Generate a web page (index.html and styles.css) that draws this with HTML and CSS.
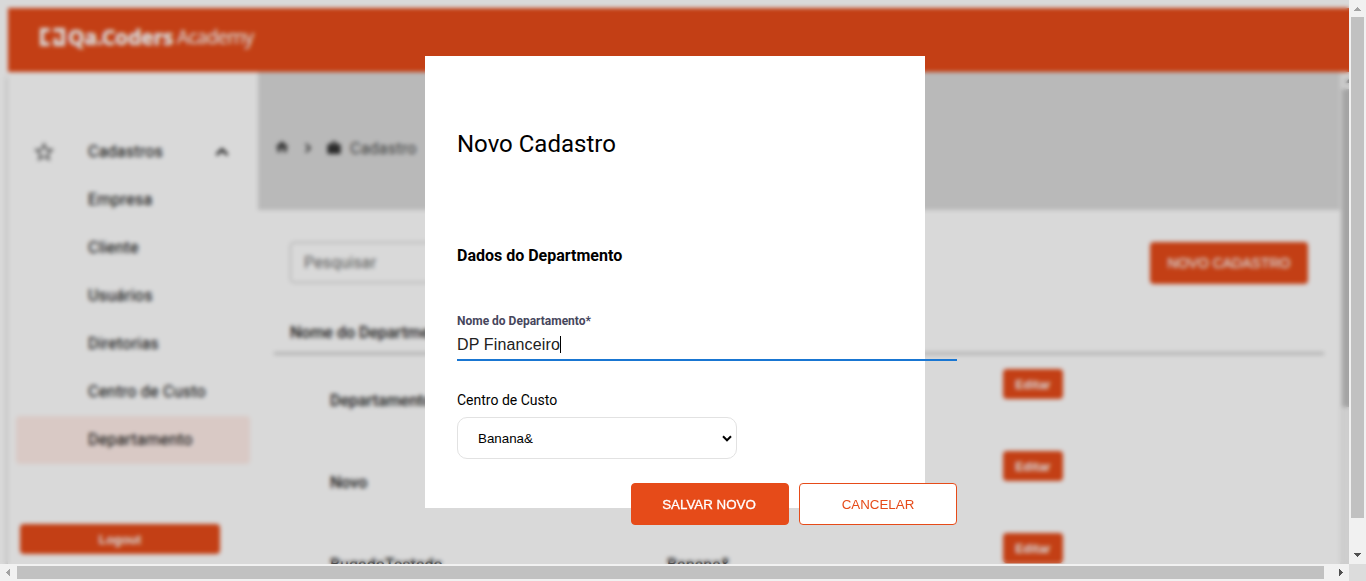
FILE: index.html
```html
<!DOCTYPE html>
<html lang="pt-BR">
<head>
<meta charset="utf-8">
<title>Qa.Coders Academy</title>
<link rel="stylesheet" href="styles.css">
</head>
<body>
<div class="window">
  <div class="viewport">
    <div class="app">
      <header class="topbar">
        <svg class="logo-mark" width="27" height="20" viewBox="0 0 27 20" fill="none" stroke="#fff" stroke-width="4"><path d="M10.500 3H3V17H10.500M14.500 3H24V17H16.500V11"/></svg>
        <span class="logo-name">Qa.Coders</span>
        <span class="logo-sub">Academy</span>
      </header>
      <div class="body">
        <nav class="sidebar">
          <div class="nav-item nav-parent">
            <svg width="24" height="24" viewBox="0 0 24 24" fill="#555"><path d="M22 9.24l-7.19-.62L12 2 9.19 8.63 2 9.24l5.46 4.73L5.82 21 12 17.27 18.18 21l-1.63-7.03L22 9.24zM12 15.4l-3.76 2.27 1-4.28-3.32-2.88 4.38-.38L12 6.1l1.71 4.04 4.38.38-3.32 2.88 1 4.28L12 15.4z"/></svg>
            <span class="nav-label">Cadastros</span>
            <svg width="24" height="24" viewBox="0 0 24 24" fill="#111"><path d="M12 8l-6 6 1.41 1.41L12 10.83l4.59 4.58L18 14z" stroke="#111" stroke-width=".6"/></svg>
          </div>
          <div class="nav-item"><span>Empresa</span></div>
          <div class="nav-item"><span>Cliente</span></div>
          <div class="nav-item"><span>Usuários</span></div>
          <div class="nav-item"><span>Diretorias</span></div>
          <div class="nav-item"><span>Centro de Custo</span></div>
          <div class="nav-item active"><span>Departamento</span></div>
          <button class="btn logout">Logout</button>
        </nav>
        <main class="main">
          <div class="banner">
            <svg class="home" width="16" height="16" viewBox="0 0 24 24" fill="#444"><path d="M10 20v-6h4v6h5v-8h3L12 3 2 12h3v8z"/></svg>
            <svg class="sep" width="18" height="18" viewBox="0 0 24 24" fill="#333" stroke="#333" stroke-width=".8"><path d="M10 6L8.59 7.41 13.17 12l-4.58 4.59L10 18l6-6z"/></svg>
            <svg class="case" width="16" height="16" viewBox="0 0 24 24" fill="#333"><path d="M20 6h-4V4c0-1.1-.9-2-2-2h-4c-1.100 0-2 .9-2 2v2H4c-1.100 0-2 .9-2 2v11c0 1.100.9 2 2 2h16c1.100 0 2-.9 2-2V8c0-1.100-.9-2-2-2zm-6 0h-4V4h4v2z"/></svg>
            <span>Cadastro</span>
          </div>
          <div class="tools">
            <div class="search">Pesquisar</div>
            <button class="btn create">NOVO CADASTRO</button>
          </div>
          <div class="table">
            <div class="thead">Nome do Departmento</div>
            <div class="row"><span>Departamento</span><span></span><button class="btn edit">Editar</button></div>
            <div class="row"><span>Novo</span><span></span><button class="btn edit">Editar</button></div>
            <div class="row"><span>BugadoTestado</span><span>Banana&amp;</span><button class="btn edit">Editar</button></div>
          </div>
        </main>
        <div class="inner-scroll">
          <svg width="17" height="17" viewBox="0 0 17 17" fill="#888"><path d="M5 11l3.500-4L12 11z"/></svg>
          <div class="inner-thumb"></div>
        </div>
      </div>
    </div>
    <div class="scrim"></div>
    <section class="modal">
      <form class="form">
        <h1 class="title">Novo Cadastro</h1>
        <h2 class="subtitle">Dados do Departmento</h2>
        <label class="field-label">Nome do Departamento*</label>
        <div class="field">DP Financeiro<span class="caret"></span></div>
        <label class="select-label">Centro de Custo</label>
        <div class="select">Banana&amp;
          <svg width="10" height="7" viewBox="0 0 10 7" fill="none" stroke="#000" stroke-width="2"><path d="M1 1.300l4 4 4-4"/></svg>
        </div>
        <div class="actions">
          <button type="button" class="action save">SALVAR NOVO</button>
          <button type="button" class="action cancel">CANCELAR</button>
        </div>
      </form>
    </section>
  </div>
  <div class="vscroll">
    <svg width="17" height="17" viewBox="0 0 17 17" fill="#a3a3a3" shape-rendering="crispEdges"><path d="M5 11h7v-1h-1v-1h-1v-1h-1v-1h-1v1h-1v1h-1v1h-1z"/></svg>
    <div class="vthumb"></div>
    <svg class="down" width="17" height="17" viewBox="0 0 17 17" fill="#505050" shape-rendering="crispEdges"><path d="M5 6h7v1h-1v1h-1v1h-1v1h-1v-1h-1v-1h-1v-1h-1z"/></svg>
  </div>
  <div class="hscroll">
    <svg width="17" height="17" viewBox="0 0 17 17" fill="#a3a3a3" shape-rendering="crispEdges"><path d="M10 5v7h-1v-1h-1v-1h-1v-1h-1v-1h1v-1h1v-1h1v-1z"/></svg>
    <div class="hthumb"></div>
    <svg class="right" width="17" height="17" viewBox="0 0 17 17" fill="#505050" shape-rendering="crispEdges"><path d="M7 5v7h1v-1h1v-1h1v-1h1v-1h-1v-1h-1v-1h-1v-1z"/></svg>
  </div>
  <div class="corner"></div>
</div>
</body>
</html>
```

FILE: styles.css
```css
* { box-sizing: border-box; }
body { margin: 0; font-family: Roboto, sans-serif; overflow: hidden; }
svg { display: block; flex: none; }
button { font-family: "Liberation Sans", Arial, sans-serif; padding: 0; }

.window {
  display: grid;
  grid-template: 564px 17px / 1349px 17px;
  width: 1366px;
  height: 581px;
}
.viewport { position: relative; overflow: hidden; background: #fff; }

.app { height: 100%; padding: 8px 0 0 8px; display: flex; flex-direction: column; }
.topbar {
  flex: none;
  height: 64px;
  padding: 0 0 7px 31px;
  background: #e64b19;
  color: #fff;
  display: flex;
  align-items: center;
  white-space: nowrap;
}
.logo-mark { margin-right: 2px; }
.logo-name {
  width: 109px;
  font: 700 21px "Noto Sans", sans-serif;
  letter-spacing: -0.1px;
  -webkit-text-stroke: .5px #fff;
}
.logo-sub { font: 400 19px "Noto Sans", sans-serif; letter-spacing: -0.75px; }

.body { flex: 1; display: flex; width: 1349px; min-height: 0; }
.sidebar {
  flex: none;
  width: 250px;
  padding: 56px 8px 0;
  background: #fff;
  box-shadow: -1px 5px 4px rgba(0, 0, 0, .2);
}
.nav-item {
  height: 48px;
  padding-left: 72px;
  border-radius: 4px;
  display: flex;
  align-items: center;
  font-size: 16px;
  font-weight: 400;
  letter-spacing: .22px;
  color: #000;
}
.nav-item span { padding-bottom: 2px; }
.nav-parent { padding: 0 16px; }
.nav-label { width: 122px; margin-left: 32px; }
.active { background: #ffede8; }
.btn {
  border: 0;
  border-radius: 4px;
  background: #e64b19;
  color: #fff;
  font-size: 12.5px;
  font-weight: 700;
}
.logout { display: block; width: 200px; height: 30px; margin: 60px 0 0 4px; padding-top: 1px; }

.main { flex: none; width: 1082px; background: #fff; overflow: hidden; }
.banner {
  height: 138px;
  padding: 14px 0 0 16px;
  background: #dadada;
  display: flex;
  align-items: center;
  color: #484848;
  font-size: 16px;
  font-weight: 400;
  letter-spacing: .22px;
}
.home { margin-bottom: 3px; }
.sep { margin: 0 9px; }
.case { margin-right: 8px; }
.tools {
  display: flex;
  justify-content: space-between;
  align-items: flex-start;
  padding: 32px 32px 0;
}
.search {
  width: 400px;
  height: 41px;
  padding-left: 13px;
  border: 1px solid #c0c0c0;
  border-radius: 4px;
  display: flex;
  align-items: center;
  color: #686868;
  font-size: 16px;
  letter-spacing: .15px;
}
.create { width: 158px; height: 42px; font-size: 14px; font-weight: 400; -webkit-text-stroke: .2px #fff; }
.table { padding: 28px 16px 0; font-size: 16px; font-weight: 500; color: #222; }
.thead { height: 43px; padding: 11px 16px 0; border-bottom: 3px solid #d2d2d2; }
.row {
  height: 82px;
  display: grid;
  grid-template-columns: 337px 336px 60px;
  padding: 14px 0 0 56px;
  align-items: start;
}
.row span { padding-top: 22px; }
.edit { width: 60px; height: 30px; padding-top: 1px; }
.inner-scroll { flex: none; width: 17px; background: #f1f1f1; }
.inner-thumb { width: 13px; height: 318px; margin-left: 2px; background: #c1c1c1; }

.scrim {
  position: absolute;
  inset: 0;
  background: rgba(0, 0, 0, .15);
  backdrop-filter: blur(2px);
}
.modal {
  position: absolute;
  left: 425px;
  top: 56px;
  width: 500px;
  height: 452px;
  padding: 72px 32px 0;
  background: #fff;
  color: #000;
}
.form { width: 500px; }
.title { margin: 0; font-size: 24px; font-weight: 400; line-height: 32px; }
.subtitle { margin: 84px 0 0; font-size: 16px; font-weight: 700; line-height: 24px; }
.field-label {
  display: block;
  margin-top: 45px;
  font-size: 12px;
  font-weight: 700;
  line-height: 16px;
  color: #46465c;
}
.field {
  display: flex;
  align-items: center;
  height: 32px;
  padding-top: 2px;
  border-bottom: 2px solid #1976d2;
  font: 16px "Liberation Sans", Arial, sans-serif;
  letter-spacing: .15px;
  color: #212121;
}
.caret { width: 1px; height: 17px; margin-bottom: 1px; background: #000; }
.select-label { display: block; margin-top: 29px; font-size: 14px; line-height: 20px; }
.select {
  width: 280px;
  height: 42px;
  margin-top: 7px;
  padding: 0 4px 0 20px;
  border: 1px solid #e2e2e2;
  border-radius: 10px;
  display: flex;
  align-items: center;
  justify-content: space-between;
  font: 13.333px "Liberation Sans", Arial, sans-serif;
}
.actions { display: flex; justify-content: flex-end; gap: 10px; margin-top: 24px; }
.action {
  width: 158px;
  height: 42px;
  border: 1px solid #e64b19;
  border-radius: 4px;
  font-size: 13.333px;
}
.save { padding-right: 2px; background: #e64b19; color: #fff; -webkit-text-stroke: .3px #fff; }
.cancel { background: #fff; color: #e64b19; }

.vscroll, .hscroll { background: #f1f1f1; display: flex; }
.vscroll { flex-direction: column; }
.vthumb { width: 13px; height: 501px; margin-left: 2px; background: #c1c1c1; }
.down { margin-top: auto; }
.hthumb { width: 1307px; height: 13px; margin-top: 2px; background: #c1c1c1; }
.right { margin-left: auto; }
.corner { background: #dcdcdc; }
```
